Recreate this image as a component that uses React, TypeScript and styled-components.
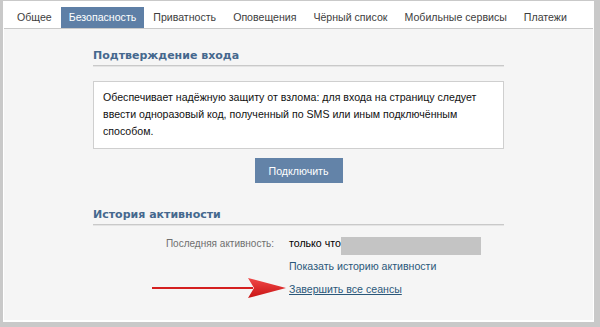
import styled, {createGlobalStyle} from 'styled-components';

const GlobalStyle = createGlobalStyle`
  html, body {
    margin: 0;
    padding: 0;
    background: #c9c9c9;
  }
  body {
    font-family: "Liberation Sans", Arial, sans-serif;
    font-size: 10.6px;
    color: #000;
  }
`;

const tabs = [
  'Общее',
  'Безопасность',
  'Приватность',
  'Оповещения',
  'Чёрный список',
  'Мобильные сервисы',
  'Платежи',
];

const Frame = styled.div`
  margin: 1px 6px 0 3px;
  height: 321px;
  box-sizing: border-box;
  background: #f5f5f5;
  border: 1px solid #fff;
  border-bottom: 2px solid #fff;
  overflow: hidden;
`;

const TabBar = styled.nav`
  display: flex;
  align-items: flex-end;
  height: 26px;
  padding-left: 5px;
  background: #fff;
  border-bottom: 1px solid #c9c9c9;
`;

const Tab = styled.div<{$active?: boolean}>`
  height: 21px;
  line-height: 21px;
  padding: 0 8px;
  margin-right: 1px;
  font-size: 10.6px;
  color: ${({$active}) => ($active ? '#fff' : '#3d3d3d')};
  background: ${({$active}) => ($active ? '#5e7fa6' : 'transparent')};
  white-space: nowrap;
`;

const Content = styled.main`
  width: 411px;
  margin: 0 auto;
  padding-top: 20px;
  display: flex;
  flex-direction: column;
`;

const Heading = styled.h2<{$top?: number}>`
  margin: ${({$top}) => $top ?? 0}px 0 0 0;
  padding-bottom: 2px;
  font-family: "DejaVu Sans", Verdana, sans-serif;
  font-size: 11px;
  line-height: 14px;
  font-weight: bold;
  color: #45688e;
  border-bottom: 1px solid #c9c9c9;
  box-shadow: 0 1px 0 #e4e4e4;
`;

const InfoBox = styled.div`
  margin-top: 15px;
  padding: 7px 10px 8px 9px;
  background: #fff;
  border: 1px solid #cfcfcf;
  line-height: 17px;
  color: #111;
`;

const Button = styled.button`
  align-self: center;
  margin-top: 9px;
  width: 88px;
  height: 25px;
  border: none;
  background: #6383a8;
  color: #fff;
  font-family: inherit;
  font-size: 10.6px;
`;

const Rows = styled.div`
  margin-top: 9px;
  display: flex;
  flex-direction: column;
  gap: 5px;
`;

const Row = styled.div`
  position: relative;
  display: grid;
  grid-template-columns: 181px 1fr;
  column-gap: 15px;
  align-items: center;
  min-height: 18px;
`;

const Label = styled.div`
  text-align: right;
  font-size: 10px;
  color: #6f6f6f;
`;

const Value = styled.div`
  position: relative;
  display: flex;
  align-items: center;
`;

const Redacted = styled.span`
  position: absolute;
  left: 52px;
  top: 0;
  width: 140px;
  height: 18px;
  background: #c4c4c4;
`;

const Link = styled.a<{$underline?: boolean}>`
  color: #2b587a;
  text-decoration: ${({$underline}) => ($underline ? 'underline' : 'none')};
  cursor: pointer;
`;

const Arrow = styled.svg`
  position: absolute;
  left: 58px;
  top: -3px;
`;

function App() {
  return (
    <>
      <GlobalStyle />
      <Frame>
        <TabBar>
          {tabs.map(t => (
            <Tab key={t} $active={t === 'Безопасность'}>
              {t}
            </Tab>
          ))}
        </TabBar>
        <Content>
          <Heading>Подтверждение входа</Heading>
          <InfoBox>
            Обеспечивает надёжную защиту от взлома: для входа на страницу следует
            ввести одноразовый код, полученный по SMS или иным подключённым
            способом.
          </InfoBox>
          <Button>Подключить</Button>
          <Heading $top={25}>История активности</Heading>
          <Rows>
            <Row>
              <Label>Последняя активность:</Label>
              <Value>
                только что
                <Redacted />
              </Value>
            </Row>
            <Row>
              <span />
              <Value>
                <Link>Показать историю активности</Link>
              </Value>
            </Row>
            <Row>
              <span />
              <Value>
                <Link $underline>Завершить все сеансы</Link>
              </Value>
              <Arrow width="136" height="22" viewBox="0 0 136 22">
                <defs>
                  <linearGradient id="ar" x1="0" y1="0" x2="0" y2="1">
                    <stop offset="0" stopColor="#f04848" />
                    <stop offset="1" stopColor="#c81414" />
                  </linearGradient>
                </defs>
                <line x1="1" y1="11" x2="102" y2="11" stroke="#d42020" strokeWidth="2" />
                <path d="M97 1 L135 11 L97 21 L103 11 Z" fill="url(#ar)" />
              </Arrow>
            </Row>
          </Rows>
        </Content>
      </Frame>
    </>
  );
}

export default App;
